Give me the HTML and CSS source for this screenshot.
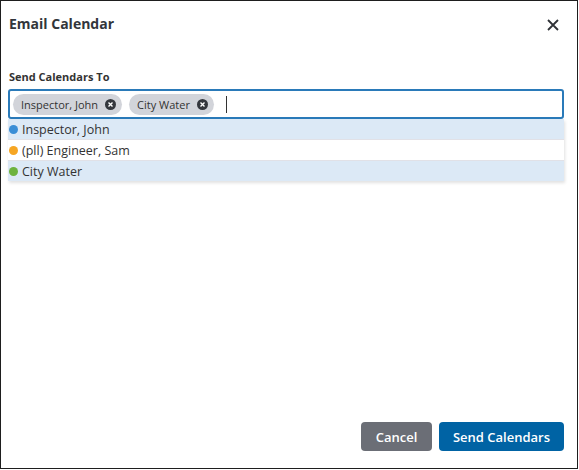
FILE: index.html
```html
<!DOCTYPE html>
<html lang="en">
<head>
  <meta charset="UTF-8">
  <title>Email Calendar</title>
  <link rel="stylesheet" href="styles.css">
</head>
<body>
  <div class="dialog">
    <div class="dialog-header">
      <h2>Email Calendar</h2>
      <button class="close" aria-label="Close">
        <svg width="12" height="12" viewBox="0 0 12 12">
          <path d="M1 1 L11 11 M11 1 L1 11" stroke="#2f3237" stroke-width="1.8" fill="none"/>
        </svg>
      </button>
    </div>

    <div class="dialog-body">
      <label class="field-label">Send Calendars To</label>
      <div class="picker">
        <div class="tags">
          <span class="tag">Inspector, John
            <svg class="tag-x" width="11" height="11" viewBox="0 0 11 11">
              <circle cx="5.5" cy="5.5" r="5.5" fill="#34373d"/>
              <path d="M3.5 3.5 L7.5 7.5 M7.5 3.5 L3.5 7.5" stroke="#fff" stroke-width="1.4"/>
            </svg>
          </span>
          <span class="tag">City Water
            <svg class="tag-x" width="11" height="11" viewBox="0 0 11 11">
              <circle cx="5.5" cy="5.5" r="5.5" fill="#34373d"/>
              <path d="M3.5 3.5 L7.5 7.5 M7.5 3.5 L3.5 7.5" stroke="#fff" stroke-width="1.4"/>
            </svg>
          </span>
          <span class="caret"></span>
        </div>
        <ul class="options">
          <li class="selected"><span class="dot blue"></span>Inspector, John</li>
          <li><span class="dot orange"></span>(pll) Engineer, Sam</li>
          <li class="selected"><span class="dot green"></span>City Water</li>
        </ul>
      </div>
    </div>

    <div class="dialog-footer">
      <button class="btn btn-cancel">Cancel</button>
      <button class="btn btn-send">Send Calendars</button>
    </div>
  </div>
</body>
</html>
```

FILE: styles.css
```css
body {
  margin: 0;
  font-family: 'Open Sans', sans-serif;
  color: #333;
  background: #fff;
}

.dialog {
  width: 578px;
  height: 469px;
  box-sizing: border-box;
  border: 1px solid #1e1e1e;
  display: flex;
  flex-direction: column;
}

.dialog-header {
  display: flex;
  justify-content: space-between;
  align-items: center;
  padding: 13px 18px 0 8px;
}

.dialog-header h2 {
  margin: 0;
  font-size: 14px;
  line-height: 20px;
  font-weight: 700;
  color: #32363b;
}

.close {
  border: none;
  background: none;
  padding: 0;
  width: 12px;
  height: 12px;
  display: flex;
  margin-top: 1px;
  cursor: pointer;
}

.dialog-body {
  padding: 35px 13px 0 7px;
}

.field-label {
  display: block;
  font-size: 11px;
  line-height: 15px;
  font-weight: 700;
  color: #333;
  padding-left: 1px;
  margin-bottom: 5px;
}

.picker {
  position: relative;
}

.tags {
  height: 30px;
  box-sizing: border-box;
  border: 2px solid #2a7ab9;
  border-radius: 3px;
  padding: 3px;
  display: flex;
  align-items: flex-start;
  gap: 7px;
}

.tag {
  display: inline-flex;
  align-items: center;
  gap: 7px;
  height: 21px;
  padding: 0 6px 0 8px;
  border-radius: 11px;
  background: #d2d4da;
  font-size: 11px;
  color: #333;
}

.tag-x {
  display: block;
}

.caret {
  width: 1px;
  height: 17px;
  margin: 2px 0 0 5px;
  background: #333;
}

.options {
  list-style: none;
  margin: 0;
  padding: 0;
  box-shadow: 1px 2px 3px rgba(0, 0, 0, 0.12);
}

.options li {
  display: flex;
  align-items: center;
  gap: 4px;
  height: 20px;
  padding-left: 1px;
  font-size: 12.5px;
  color: #333;
  background: #fff;
  border-bottom: 1px solid #e1e1e7;
}

.options li:last-child {
  border-bottom: none;
}

.options li.selected {
  background: #dce9f6;
}

.dot {
  width: 9px;
  height: 9px;
  border-radius: 50%;
}

.dot.blue { background: #3a8ed6; }
.dot.orange { background: #f6a623; }
.dot.green { background: #6db33f; }

.dialog-footer {
  margin-top: auto;
  display: flex;
  justify-content: flex-end;
  gap: 7px;
  padding: 0 13px 17px 0;
}

.btn {
  height: 29px;
  border: none;
  border-radius: 4px;
  color: #fff;
  font-family: 'Open Sans', sans-serif;
  font-size: 13px;
  font-weight: 600;
  cursor: pointer;
}

.btn-cancel {
  width: 71px;
  background: #6b6e76;
}

.btn-send {
  width: 125px;
  background: #0063a4;
}
```
